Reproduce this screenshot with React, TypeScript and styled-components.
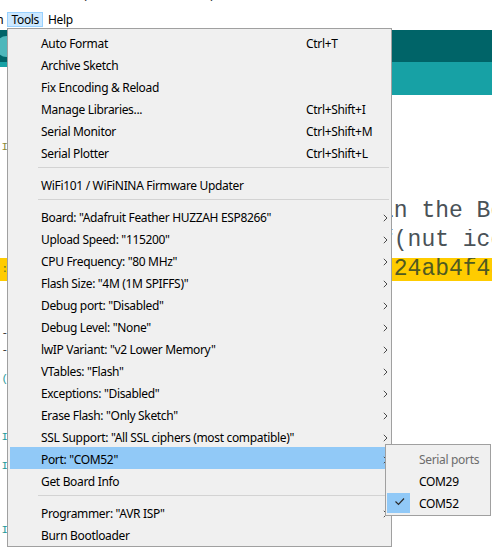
import React from "react";
import styled, { createGlobalStyle } from "styled-components";

const GlobalStyle = createGlobalStyle`
  html, body { margin: 0; padding: 0; background: #ffffff; }
  body { width: 492px; height: 550px; overflow: hidden; }
  #root { width: 492px; height: 550px; }
`;

const uiFont = `"Noto Sans", "Open Sans", "Liberation Sans", sans-serif`;
const monoFont = `"Liberation Mono", "Courier New", monospace`;

/* ---------- window chrome ---------- */

const Window = styled.div`
  position: relative;
  width: 492px;
  height: 550px;
  overflow: hidden;
  background: #ffffff;
  font-family: ${uiFont};
  font-size: 12px;
  letter-spacing: -0.33px;
  color: #000000;
  display: flex;
  flex-direction: column;
`;

const TitleBar = styled.div`
  flex: none;
  height: 10px;
  box-sizing: border-box;
  padding: 0 0 7px 3px;
  display: flex;
  align-items: flex-end;
  overflow: hidden;
  white-space: nowrap;
  line-height: 16px;
  color: #1a1a1a;
`;

const MenuBar = styled.div`
  flex: none;
  height: 18px;
  box-sizing: border-box;
  padding-top: 2px;
  display: flex;
  align-items: flex-start;
  white-space: nowrap;
`;

const MenuLead = styled.div`
  flex: none;
  width: 43px;
  display: flex;
  justify-content: flex-end;
`;

const MenuTitle = styled.div<{ $open?: boolean; $pad: number }>`
  flex: none;
  height: 15px;
  box-sizing: border-box;
  padding: 0 ${(p) => p.$pad}px;
  border: 1px solid ${(p) => (p.$open ? "#99d1ff" : "transparent")};
  background: ${(p) => (p.$open ? "#cce8ff" : "transparent")};
  display: flex;
  align-items: center;
  line-height: 13px;
`;

const Content = styled.div`
  flex: 1;
  display: flex;
  flex-direction: column;
  padding-top: 2px;
`;

const Toolbar = styled.div`
  flex: none;
  height: 32px;
  background: #006468;
  display: flex;
  align-items: center;
`;

const ToolButton = styled.div`
  width: 21px;
  height: 21px;
  margin-left: -4px;
  border-radius: 50%;
  background: #4db7bb;
`;

const TabBar = styled.div`
  flex: none;
  height: 33px;
  box-sizing: border-box;
  padding-top: 5px;
  background: #17a1a5;
  display: flex;
`;

const Tab = styled.div`
  width: 150px;
  height: 28px;
  background: #ffffff;
`;

const Editor = styled.div`
  flex: 1;
  padding-top: 15px;
  display: flex;
  flex-direction: column;
  font-family: ${monoFont};
  letter-spacing: 0;
`;

const EditorLine = styled.div`
  flex: none;
  height: 29px;
  display: flex;
  align-items: center;
`;

const LineBand = styled.div<{ $hl?: boolean }>`
  flex: 1;
  height: 23px;
  display: flex;
  align-items: stretch;
  background: ${(p) => (p.$hl ? "#ffcc00" : "transparent")};
`;

const Gutter = styled.div<{ $color: string; $align: string }>`
  flex: none;
  width: 8px;
  overflow: hidden;
  display: flex;
  align-items: ${(p) => p.$align};
  justify-content: flex-end;
  font-size: 11px;
  line-height: 11px;
  color: ${(p) => p.$color};
`;

const CodeTail = styled.div<{ $color: string }>`
  flex: none;
  margin-left: auto;
  width: 112px;
  overflow: hidden;
  white-space: pre;
  font-size: 23px;
  line-height: 23px;
  color: ${(p) => p.$color};
`;

/* ---------- dropdown menu (overlay) ---------- */

const Dropdown = styled.div`
  position: absolute;
  left: 7px;
  top: 28px;
  width: 385px;
  box-sizing: border-box;
  border: 1px solid #a0a0a0;
  background: #f0f0f0;
  padding: 2px 0 1px;
  display: flex;
  flex-direction: column;
`;

const Item = styled.div<{ $active?: boolean }>`
  flex: none;
  height: 22px;
  box-sizing: border-box;
  padding-top: 4px;
  margin: 0 2px;
  display: grid;
  grid-template-columns: 31px 265px 1fr 8px;
  align-items: center;
  white-space: nowrap;
  line-height: 18px;
  background: ${(p) => (p.$active ? "#91c9f7" : "transparent")};
`;

const Label = styled.span`
  grid-column: 2;
`;

const Shortcut = styled.span`
  grid-column: 3;
`;

const Chevron = styled.svg`
  grid-column: 4;
  justify-self: center;
  display: block;
`;

const Separator = styled.div`
  flex: none;
  height: 1px;
  margin: 4px 2px 5px 30px;
  background: #d3d3d3;
`;

const Submenu = styled.div`
  position: absolute;
  left: 385px;
  top: 444px;
  width: 106px;
  box-sizing: border-box;
  border: 1px solid #a0a0a0;
  background: #f0f0f0;
  padding: 3px 0 1px;
  display: flex;
  flex-direction: column;
`;

const SubItem = styled.div<{ $muted?: boolean }>`
  flex: none;
  height: 22px;
  display: grid;
  grid-template-columns: 33px 1fr;
  grid-template-rows: 22px;
  align-items: center;
  white-space: nowrap;
  line-height: 18px;
  color: ${(p) => (p.$muted ? "#6d6d6d" : "#000000")};
`;

const SubLabel = styled.span`
  grid-column: 2;
  grid-row: 1;
  padding-top: 1px;
`;

const CheckCell = styled.div`
  grid-column: 1;
  grid-row: 1;
  display: flex;
  align-items: center;
`;

const CheckBox = styled.div`
  width: 23px;
  height: 20px;
  margin-left: 1px;
  background: #91c9f7;
  display: flex;
`;

/* ---------- data ---------- */

type Row =
  | { kind: "item"; label: string; shortcut?: string; sub?: boolean; active?: boolean }
  | { kind: "sep" };

const rows: Row[] = [
  { kind: "item", label: "Auto Format", shortcut: "Ctrl+T" },
  { kind: "item", label: "Archive Sketch" },
  { kind: "item", label: "Fix Encoding & Reload" },
  { kind: "item", label: "Manage Libraries...", shortcut: "Ctrl+Shift+I" },
  { kind: "item", label: "Serial Monitor", shortcut: "Ctrl+Shift+M" },
  { kind: "item", label: "Serial Plotter", shortcut: "Ctrl+Shift+L" },
  { kind: "sep" },
  { kind: "item", label: "WiFi101 / WiFiNINA Firmware Updater" },
  { kind: "sep" },
  { kind: "item", label: 'Board: "Adafruit Feather HUZZAH ESP8266"', sub: true },
  { kind: "item", label: 'Upload Speed: "115200"', sub: true },
  { kind: "item", label: 'CPU Frequency: "80 MHz"', sub: true },
  { kind: "item", label: 'Flash Size: "4M (1M SPIFFS)"', sub: true },
  { kind: "item", label: 'Debug port: "Disabled"', sub: true },
  { kind: "item", label: 'Debug Level: "None"', sub: true },
  { kind: "item", label: 'lwIP Variant: "v2 Lower Memory"', sub: true },
  { kind: "item", label: 'VTables: "Flash"', sub: true },
  { kind: "item", label: 'Exceptions: "Disabled"', sub: true },
  { kind: "item", label: 'Erase Flash: "Only Sketch"', sub: true },
  { kind: "item", label: 'SSL Support: "All SSL ciphers (most compatible)"', sub: true },
  { kind: "item", label: 'Port: "COM52"', sub: true, active: true },
  { kind: "item", label: "Get Board Info" },
  { kind: "sep" },
  { kind: "item", label: 'Programmer: "AVR ISP"', sub: true },
  { kind: "item", label: "Burn Bootloader" },
];

type Line = { lead?: string; leadColor?: string; leadAlign?: string; tail?: string; tailColor?: string; hl?: boolean };

const lines: Line[] = [
  {},
  { lead: "I", leadColor: "#8a8a3a", leadAlign: "flex-start" },
  {},
  { tail: "in the Board", tailColor: "#4a5257" },
  { tail: "f(nut icon", tailColor: "#4a5257" },
  { tail: "\"24ab4f4a", tailColor: "#4f5a22", hl: true, lead: ".:", leadColor: "#5f7a1a", leadAlign: "center" },
  {},
  { lead: "-", leadColor: "#333333", leadAlign: "flex-end" },
  { lead: "-", leadColor: "#333333", leadAlign: "flex-start" },
  { lead: "(", leadColor: "#2a9a9c", leadAlign: "flex-start" },
  {},
  { lead: "I", leadColor: "#1f9a9c", leadAlign: "flex-start" },
  { lead: "I", leadColor: "#1f9a9c", leadAlign: "flex-start" },
  {},
  { lead: "I", leadColor: "#1f9a9c", leadAlign: "center" },
];

const ChevronIcon = () => (
  <Chevron width="5" height="8" viewBox="0 0 5 8" aria-hidden="true">
    <polyline points="0.8,0.8 4,4 0.8,7.2" fill="none" stroke="#4a4a4a" strokeWidth="1" />
  </Chevron>
);

const CheckIcon = () => (
  <svg width="23" height="20" viewBox="0 0 23 20" aria-hidden="true">
    <polyline points="8.5,8.5 11.5,11.5 17,5.5" fill="none" stroke="#2b2b2b" strokeWidth="1.2" />
  </svg>
);

export default function App() {
  return (
    <>
      <GlobalStyle />
      <Window>
        <TitleBar>Arduino 1.8.13 (Windows Store 1.8.42.0)</TitleBar>
        <MenuBar>
          <MenuLead>
            <MenuTitle $pad={3}>Sketch</MenuTitle>
            <MenuTitle $pad={3} $open>
              Tools
            </MenuTitle>
          </MenuLead>
          <MenuTitle $pad={4}>Help</MenuTitle>
        </MenuBar>
        <Content>
          <Toolbar>
            <ToolButton />
          </Toolbar>
          <TabBar>
            <Tab />
          </TabBar>
          <Editor>
            {lines.map((l, i) => (
              <EditorLine key={i}>
                <LineBand $hl={l.hl}>
                  <Gutter $color={l.leadColor ?? "#333"} $align={l.leadAlign ?? "center"}>
                    {l.lead ?? ""}
                  </Gutter>
                  {l.tail && <CodeTail $color={l.tailColor ?? "#434f54"}>{l.tail}</CodeTail>}
                </LineBand>
              </EditorLine>
            ))}
          </Editor>
        </Content>

        <Dropdown>
          {rows.map((r, i) =>
            r.kind === "sep" ? (
              <Separator key={i} />
            ) : (
              <Item key={i} $active={r.active}>
                <Label>{r.label}</Label>
                {r.shortcut && <Shortcut>{r.shortcut}</Shortcut>}
                {r.sub && <ChevronIcon />}
              </Item>
            )
          )}
        </Dropdown>

        <Submenu>
          <SubItem $muted>
            <SubLabel>Serial ports</SubLabel>
          </SubItem>
          <SubItem>
            <SubLabel>COM29</SubLabel>
          </SubItem>
          <SubItem>
            <CheckCell>
              <CheckBox>
                <CheckIcon />
              </CheckBox>
            </CheckCell>
            <SubLabel>COM52</SubLabel>
          </SubItem>
        </Submenu>
      </Window>
    </>
  );
}
